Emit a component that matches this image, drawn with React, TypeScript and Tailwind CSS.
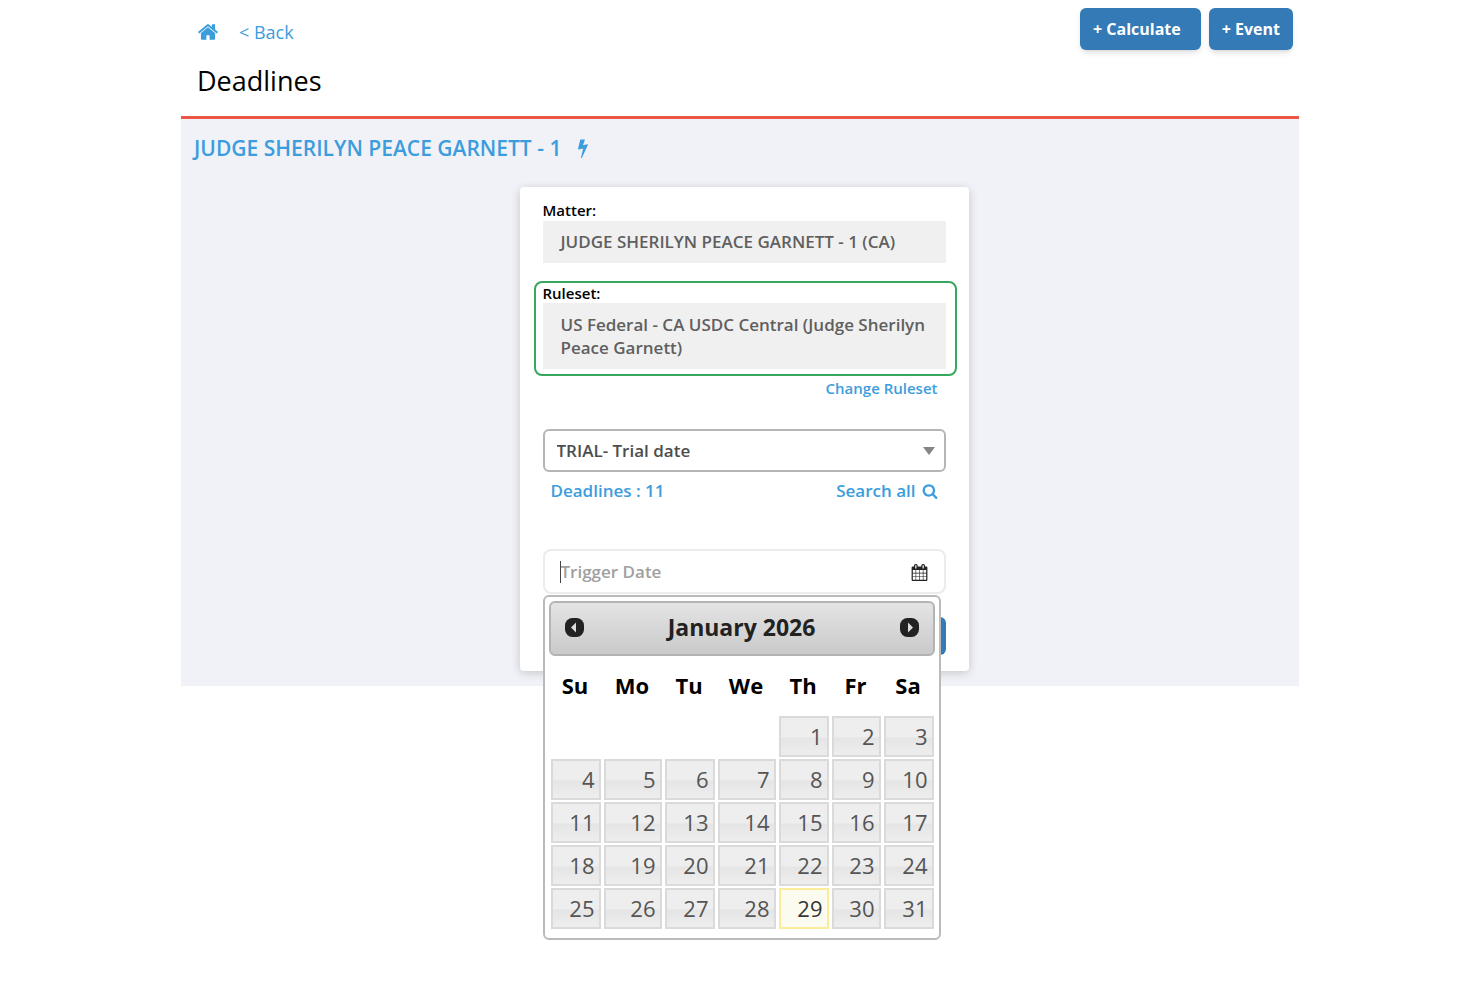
import React, { useState } from 'react';
import { clsx } from 'clsx';

interface IconProps {
  path: string;
  className?: string;
}

const ICONS = {
  home: 'M1472 992v480q0 26-19 45t-45 19h-384v-384h-256v384h-384q-26 0-45-19t-19-45v-480q0-1 .5-3t.5-3l575-474 575 474q1 2 1 6zm223-69l-62 74q-8 9-21 11h-3q-13 0-21-7l-692-577-692 577q-12 8-24 7-13-2-21-11l-62-74q-8-10-7-23.5t11-21.5l719-599q32-26 76-26t76 26l244 204v-195q0-14 9-23t23-9h192q14 0 23 9t9 23v408l219 182q10 8 11 21.5t-7 23.5z',
  bolt: 'M1333 566q18 20 7 44l-540 1157q-13 25-42 25-4 0-14-2-17-5-25.5-19t-4.5-30l197-808-406 101q-4 1-12 1-18 0-31-11-18-15-13-39l201-825q4-14 16-23t28-9h328q19 0 32 12.5t13 29.5q0 8-5 18l-171 463 396-98q8-2 12-2 19 0 34 15z',
  search: 'M1216 832q0-185-131.5-316.5t-316.5-131.5-316.5 131.5-131.5 316.5 131.5 316.5 316.5 131.5 316.5-131.5 131.5-316.5zm512 832q0 52-38 90t-90 38q-54 0-90-38l-343-342q-179 124-399 124-143 0-273.5-55.5t-225-150-150-225-55.5-273.5 55.5-273.5 150-225 225-150 273.5-55.5 273.5 55.5 225 150 150 225 55.5 273.5q0 220-124 399l343 343q37 37 37 90z',
  calendar: 'M192 1664h288v-288h-288v288zm352 0h320v-288h-320v288zm-352-352h288v-320h-288v320zm352 0h320v-320h-320v320zm-352-384h288v-288h-288v288zm736 736h320v-288h-320v288zm-384-736h320v-288h-320v288zm768 736h288v-288h-288v288zm-384-352h320v-320h-320v320zm-352-864v-288q0-13-9.5-22.5t-22.5-9.5h-64q-13 0-22.5 9.5t-9.5 22.5v288q0 13 9.5 22.5t22.5 9.5h64q13 0 22.5-9.5t9.5-22.5zm736 864h288v-320h-288v320zm-384-384h320v-288h-320v288zm384 0h288v-288h-288v288zm32-480v-288q0-13-9.5-22.5t-22.5-9.5h-64q-13 0-22.5 9.5t-9.5 22.5v288q0 13 9.5 22.5t22.5 9.5h64q13 0 22.5-9.5t9.5-22.5zm384-64v1280q0 52-38 90t-90 38h-1408q-52 0-90-38t-38-90v-1280q0-52 38-90t90-38h128v-96q0-66 47-113t113-47h64q66 0 113 47t47 113v96h384v-96q0-66 47-113t113-47h64q66 0 113 47t47 113v96h128q52 0 90 38t38 90z',
};

const Icon: React.FC<IconProps> = ({ path, className }) => (
  <svg viewBox="0 0 1792 1792" fill="currentColor" aria-hidden="true" className={className}>
    <path d={path} />
  </svg>
);

const WEEKDAYS = [
  { label: 'Su', width: 'w-[53px]' },
  { label: 'Mo', width: 'w-[61px]' },
  { label: 'Tu', width: 'w-[53px]' },
  { label: 'We', width: 'w-[61px]' },
  { label: 'Th', width: 'w-[53px]' },
  { label: 'Fr', width: 'w-[52px]' },
  { label: 'Sa', width: 'w-[53px]' },
];

// January 2026 starts on a Thursday
const FIRST_WEEKDAY = 4;
const DAYS_IN_MONTH = 31;
const TODAY = 29;

const WEEKS = Array.from({ length: 5 }, (_, week) =>
  Array.from({ length: 7 }, (_, day) => {
    const date = week * 7 + day - FIRST_WEEKDAY + 1;
    return date >= 1 && date <= DAYS_IN_MONTH ? date : null;
  })
);

const MonthArrow: React.FC<{ direction: 'prev' | 'next' }> = ({ direction }) => (
  <button
    type="button"
    aria-label={direction === 'prev' ? 'Previous month' : 'Next month'}
    className="flex size-[19px] items-center justify-center"
  >
    <svg viewBox="0 0 19 19" className="size-[19px]" aria-hidden="true">
      <rect width="19" height="19" rx="7.5" fill="#222" />
      <path d={direction === 'prev' ? 'M11 4.5v10L6 9.5z' : 'M8 4.5v10L13 9.5z'} fill="#dcdcdc" />
    </svg>
  </button>
);

const DatePicker: React.FC<{ onSelect: (date: number) => void }> = ({ onSelect }) => (
  <div className="absolute top-full left-0 z-10 mt-px w-[398px] rounded-md border-2 border-[#bababa] bg-white p-1 pb-2">
    <div className="flex h-[55px] items-center justify-between rounded-md border-2 border-[#b4b4b4] bg-linear-to-b from-[#e4e4e4] to-[#cacaca] px-[14px] pb-[3px]">
      <MonthArrow direction="prev" />
      <span className="text-[23px] font-bold text-[#222]">January 2026</span>
      <MonthArrow direction="next" />
    </div>
    <table className="w-full table-fixed border-collapse">
      <thead>
        <tr>
          {WEEKDAYS.map(({ label, width }) => (
            <th key={label} scope="col" className={clsx('h-[59px] p-0 text-[22px] font-bold text-black', width)}>
              {label}
            </th>
          ))}
        </tr>
      </thead>
      <tbody>
        {WEEKS.map((week, index) => (
          <tr key={index}>
            {week.map((date, day) => (
              <td key={day} className="py-px pr-px pl-[2px]">
                {date && (
                  <button
                    type="button"
                    onClick={() => onSelect(date)}
                    className={clsx(
                      'block h-[41px] w-full border-2 pr-1 text-right text-[22px] font-normal',
                      date === TODAY
                        ? 'border-[#fbec9c] bg-[#fbfbf0] text-[#363636]'
                        : 'border-[#dadada] bg-linear-to-b from-[#eeeeee] from-50% via-[#e5e5e5] via-55% to-[#eeeeee] text-[#555]'
                    )}
                  >
                    {date}
                  </button>
                )}
              </td>
            ))}
          </tr>
        ))}
      </tbody>
    </table>
  </div>
);

const DeadlineForm: React.FC = () => {
  const [triggerDate, setTriggerDate] = useState('');

  return (
    <form
      onSubmit={(event) => event.preventDefault()}
      className="mx-auto w-full max-w-[449px] rounded-sm bg-white px-[23px] pt-[13px] pb-4 text-[17px] font-semibold text-[#5f5f5f] shadow-[0_2px_10px_rgba(0,0,0,0.18)]"
    >
      <div className="text-[15px] leading-[21px] text-black">Matter:</div>
      <div className="bg-[#f0f0f0] px-[18px] py-[10px] leading-[22px]">JUDGE SHERILYN PEACE GARNETT - 1 (CA)</div>

      <div className="mt-[18px] -mr-[11px] mb-px -ml-[9px] rounded-lg border-2 border-[#37a85b] pr-[9px] pb-[5px] pl-[7px]">
        <div className="text-[15px] leading-5 text-black">Ruleset:</div>
        <div className="bg-[#f0f0f0] px-[18px] py-[10px] leading-[23px]">
          US Federal - CA USDC Central (Judge Sherilyn Peace Garnett)
        </div>
      </div>
      <div className="flex justify-end pr-2 text-[15px] leading-[22px] text-[#3c9ddd]">
        <a href="#ruleset">Change Ruleset</a>
      </div>

      <div className="relative mt-[30px]">
        <select
          aria-label="Trigger"
          className="block h-[43px] w-full appearance-none rounded-md border-2 border-[#b5b5b5] bg-white pr-8 pl-3 text-[#4d4d4d]"
        >
          <option>TRIAL- Trial date</option>
        </select>
        <svg
          viewBox="0 0 12 8"
          aria-hidden="true"
          className="pointer-events-none absolute top-[18px] right-[11px] h-2 w-3 fill-[#858585]"
        >
          <path d="M0 0h12L6 8z" />
        </svg>
      </div>
      <div className="flex h-[38px] items-center justify-between px-2 text-[#3c9ddd]">
        <a href="#deadlines">Deadlines : 11</a>
        <a href="#search" className="flex items-center gap-[6px]">
          Search all
          <Icon path={ICONS.search} className="size-4" />
        </a>
      </div>

      <div className="relative mt-[39px]">
        <div className="flex h-[45px] items-center rounded-lg border-2 border-[#ececec] pr-4 pl-[15px]">
          <span className="h-[22px] w-px bg-[#444]" />
          <input
            type="text"
            aria-label="Trigger Date"
            placeholder="Trigger Date"
            value={triggerDate}
            onChange={(event) => setTriggerDate(event.target.value)}
            className="min-w-0 flex-1 outline-none placeholder:text-[#a0a0a0]"
          />
          <button type="button" aria-label="Open calendar" className="pt-[2px] text-[#222]">
            <Icon path={ICONS.calendar} className="size-[17px]" />
          </button>
        </div>
        <DatePicker onSelect={(date) => setTriggerDate(`01/${String(date).padStart(2, '0')}/2026`)} />
      </div>

      <div className="mt-[23px] flex justify-end">
        <button type="submit" aria-label="Submit" className="h-[38px] w-24 rounded-md bg-[#337ab7]" />
      </div>
    </form>
  );
};

const App: React.FC = () => (
  <div className="min-h-screen bg-white font-['Open_Sans',sans-serif]">
    <div className="mx-auto w-full max-w-[1118px]">
      <header className="flex items-start justify-between border-b-3 border-[#ea5545] pr-[6px] pb-[15px] pl-4">
        <div className="pt-4">
          <nav className="flex h-8 items-center gap-5 text-lg text-[#3c9ddd]">
            <a href="#home" aria-label="Home">
              <Icon path={ICONS.home} className="size-[22px]" />
            </a>
            <a href="#back">&lt; Back</a>
          </nav>
          <h1 className="mt-[13px] text-[27px] leading-10 text-black">Deadlines</h1>
        </div>
        <div className="flex gap-2 pt-2 text-base font-bold text-white">
          <button type="button" className="h-[42px] rounded-md bg-[#337ab7] pr-5 pl-[13px] shadow-md">
            + Calculate
          </button>
          <button type="button" className="h-[42px] rounded-md bg-[#337ab7] px-[13px] shadow-md">
            + Event
          </button>
        </div>
      </header>
      <main className="bg-[#f0f2f7] pt-[13px] pb-[15px] pl-2">
        <h2 className="mb-[23px] flex items-center gap-3 pl-[5px] text-[21px] leading-8 font-semibold text-[#3c9ddd]">
          JUDGE SHERILYN PEACE GARNETT - 1
          <Icon path={ICONS.bolt} className="size-5" />
        </h2>
        <DeadlineForm />
      </main>
    </div>
  </div>
);

export default App;
